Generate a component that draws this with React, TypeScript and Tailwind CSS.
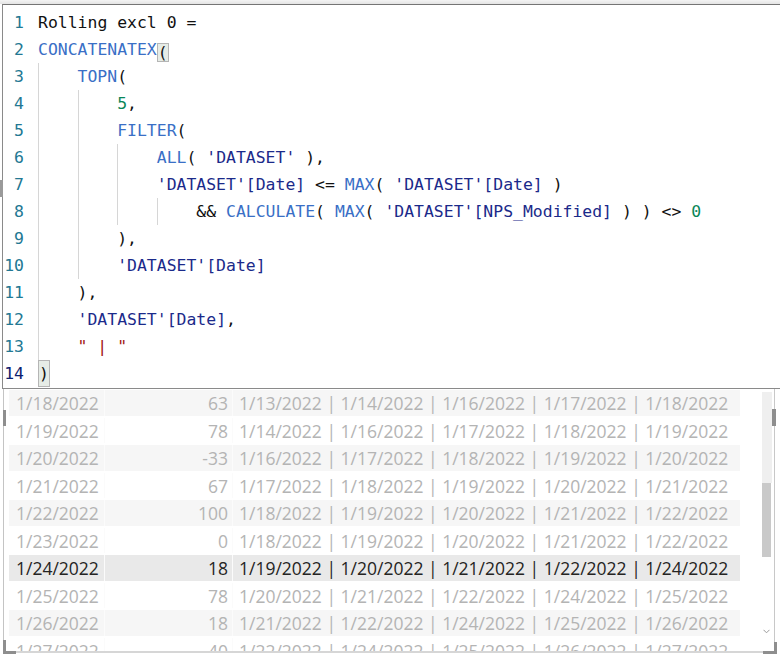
import React from "react";

// token colours of the DAX editor
const FN = "text-[#3a6fc6]";
const REF = "text-[#1b2a8a]";
const NUM = "text-[#098658]";
const STR = "text-[#a31515]";
const TXT = "text-[#111111]";

type Tok = { t: string; c: string; box?: "small" | "tall" };
type Line = { indent: number; toks: Tok[] };

const lines: Line[] = [
  { indent: 0, toks: [{ t: "Rolling excl 0 =", c: TXT }] },
  { indent: 0, toks: [{ t: "CONCATENATEX", c: FN }, { t: "(", c: TXT, box: "small" }] },
  { indent: 1, toks: [{ t: "TOPN", c: FN }, { t: "(", c: TXT }] },
  { indent: 2, toks: [{ t: "5", c: NUM }, { t: ",", c: TXT }] },
  { indent: 2, toks: [{ t: "FILTER", c: FN }, { t: "(", c: TXT }] },
  {
    indent: 3,
    toks: [
      { t: "ALL", c: FN },
      { t: "( ", c: TXT },
      { t: "'DATASET'", c: REF },
      { t: " ),", c: TXT },
    ],
  },
  {
    indent: 3,
    toks: [
      { t: "'DATASET'[Date]", c: REF },
      { t: " <= ", c: TXT },
      { t: "MAX", c: FN },
      { t: "( ", c: TXT },
      { t: "'DATASET'[Date]", c: REF },
      { t: " )", c: TXT },
    ],
  },
  {
    indent: 4,
    toks: [
      { t: "&& ", c: TXT },
      { t: "CALCULATE", c: FN },
      { t: "( ", c: TXT },
      { t: "MAX", c: FN },
      { t: "( ", c: TXT },
      { t: "'DATASET'[NPS_Modified]", c: REF },
      { t: " ) ) <> ", c: TXT },
      { t: "0", c: NUM },
    ],
  },
  { indent: 2, toks: [{ t: "),", c: TXT }] },
  { indent: 2, toks: [{ t: "'DATASET'[Date]", c: REF }] },
  { indent: 1, toks: [{ t: "),", c: TXT }] },
  { indent: 1, toks: [{ t: "'DATASET'[Date]", c: REF }, { t: ",", c: TXT }] },
  { indent: 1, toks: [{ t: '" | "', c: STR }] },
  { indent: 0, toks: [{ t: ")", c: TXT, box: "tall" }] },
];

const rows = [
  ["1/18/2022", "63", "1/13/2022 | 1/14/2022 | 1/16/2022 | 1/17/2022 | 1/18/2022"],
  ["1/19/2022", "78", "1/14/2022 | 1/16/2022 | 1/17/2022 | 1/18/2022 | 1/19/2022"],
  ["1/20/2022", "-33", "1/16/2022 | 1/17/2022 | 1/18/2022 | 1/19/2022 | 1/20/2022"],
  ["1/21/2022", "67", "1/17/2022 | 1/18/2022 | 1/19/2022 | 1/20/2022 | 1/21/2022"],
  ["1/22/2022", "100", "1/18/2022 | 1/19/2022 | 1/20/2022 | 1/21/2022 | 1/22/2022"],
  ["1/23/2022", "0", "1/18/2022 | 1/19/2022 | 1/20/2022 | 1/21/2022 | 1/22/2022"],
  ["1/24/2022", "18", "1/19/2022 | 1/20/2022 | 1/21/2022 | 1/22/2022 | 1/24/2022"],
  ["1/25/2022", "78", "1/20/2022 | 1/21/2022 | 1/22/2022 | 1/24/2022 | 1/25/2022"],
  ["1/26/2022", "18", "1/21/2022 | 1/22/2022 | 1/24/2022 | 1/25/2022 | 1/26/2022"],
  ["1/27/2022", "40", "1/22/2022 | 1/24/2022 | 1/25/2022 | 1/26/2022 | 1/27/2022"],
];

const SELECTED = 6;

const CodeLine = ({ line, n }: { line: Line; n: number }) => {
  const current = n === 14;
  return (
    <div className="flex h-[27px]">
      <div
        className={
          "w-[21px] shrink-0 text-right leading-[27px] " +
          (current ? "text-[#0b216f]" : "text-[#237893]")
        }
      >
        {n}
      </div>
      <div className="ml-[14px] flex">
        {Array.from({ length: line.indent }).map((_, i) => (
          <span key={i} className="w-[4ch] shrink-0 border-l border-[#d6d6d6]" />
        ))}
        {line.toks.map((tok, i) =>
          tok.box === "small" ? (
            <span
              key={i}
              className={"mt-[7.5px] h-[19px] border border-[#b5b5b5] bg-[#e6ece6] leading-[17px] whitespace-pre " + tok.c}
            >
              {tok.t}
            </span>
          ) : tok.box === "tall" ? (
            <span
              key={i}
              className={"h-[27px] border border-[#b5b5b5] bg-[#e6ece6] leading-[25px] whitespace-pre " + tok.c}
            >
              {tok.t}
            </span>
          ) : (
            <span key={i} className={"leading-[27px] whitespace-pre " + tok.c}>
              {tok.t}
            </span>
          )
        )}
      </div>
    </div>
  );
};

export default function App() {
  return (
    <div className="relative h-[658px] w-[780px] overflow-hidden bg-white">
      {/* strip above the editor */}
      <div className="h-[4px] bg-gradient-to-b from-[#f4f4f4] to-[#e4e4e4]" />

      {/* formula editor */}
      <div
        className="h-[385px] border-t border-b border-l border-[#8a8a8a] border-t-[#757575] ml-[2px] pt-[3.5px] text-[16.45px]"
        style={{ fontFamily: '"DejaVu Sans Mono", "Liberation Mono", monospace' }}
      >
        {lines.map((line, i) => (
          <CodeLine key={i} line={line} n={i + 1} />
        ))}
      </div>

      {/* table visual */}
      <div
        className="ml-[3px] flex h-[262px] border-l border-[#c4c4c4] text-[17.5px]"
        style={{ fontFamily: '"Open Sans", "Noto Sans", sans-serif' }}
      >
        <div className="ml-[5px] h-full w-[731px] overflow-hidden">
          <div className="-mt-[1px]">
            {rows.map((r, i) => {
              const sel = i === SELECTED;
              const bg = sel ? "bg-[#e9e9e9]" : i % 2 === 0 ? "bg-[#f6f6f6]" : "bg-white";
              const fg = sel ? "text-[#252423]" : "text-[#b4b4b4]";
              return (
                <div key={i} className={"flex h-[27.5px] items-center pt-[2px] " + fg}>
                  <div className={"h-full w-[96px] border-r border-[#fbfbfb] pl-[7px] leading-[26px] " + bg}>{r[0]}</div>
                  <div className={"h-full w-[128px] border-r border-[#fbfbfb] pr-[4px] text-right leading-[26px] " + bg}>
                    {r[1]}
                  </div>
                  <div className={"h-full flex-1 whitespace-pre pl-[6px] leading-[26px] " + bg}>{r[2]}</div>
                </div>
              );
            })}
          </div>
        </div>

        <div className="w-[22px]" />

        {/* vertical scrollbar */}
        <div className="flex h-full w-[10px] flex-col pt-[3px]">
          <div className="h-[91px] bg-[#efefef]" />
          <div className="h-[74px] w-[9px] bg-[#c9c9c9]" />
          <div className="flex flex-1 items-end justify-center pb-[17px] pr-[2px]">
            <svg width="7" height="5" viewBox="0 0 7 5">
              <polyline points="0.5,0.8 3.5,3.8 6.5,0.8" fill="none" stroke="#9a9a9a" strokeWidth="1" />
            </svg>
          </div>
        </div>

        <div className="ml-[2px] h-full w-px bg-[#c8c8c8]" />
      </div>

      {/* bottom edge of the visual */}
      <div className="ml-[16px] mr-[10px] h-[2px] bg-[#d6d6d6]" />

      {/* resize handles */}
      <div className="absolute left-0 top-[180px] h-[17px] w-[3px] bg-[#9a9a9a]" />
      <div className="absolute left-[3px] top-[410px] h-[16px] w-[3px] bg-[#8e8e8e]" />
      <div className="absolute left-[772px] top-[409px] h-[17px] w-[4px] bg-[#8e8e8e]" />
      <div className="absolute left-[3px] top-[640px] h-[14px] w-[3px] bg-[#8e8e8e]" />
      <div className="absolute left-[3px] top-[651px] h-[3px] w-[13px] bg-[#8e8e8e]" />
      <div className="absolute left-[774px] top-[642px] h-[12px] w-[3px] bg-[#8e8e8e]" />
      <div className="absolute left-[763px] top-[651px] h-[3px] w-[14px] bg-[#8e8e8e]" />
    </div>
  );
}
